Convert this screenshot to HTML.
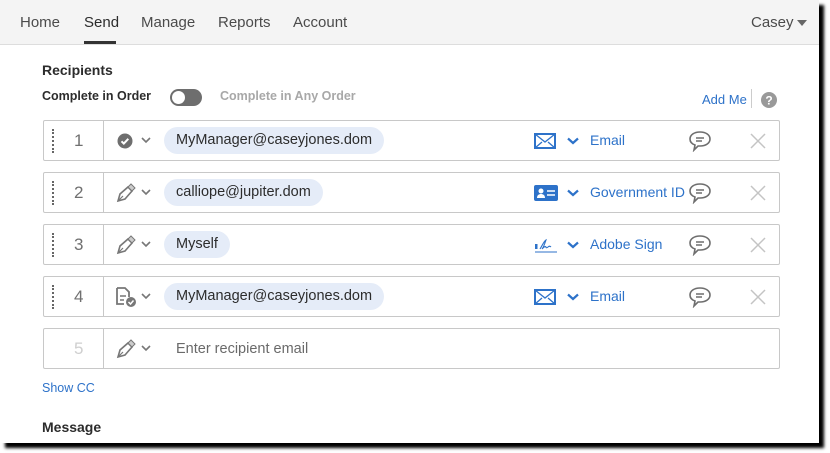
<!DOCTYPE html>
<html><head><meta charset="utf-8"><style>
body{margin:0;width:830px;height:453px;background:#fff;font-family:"Liberation Sans",sans-serif;overflow:hidden;position:relative}
.page{position:absolute;left:0;top:0;width:819px;height:443px;background:#fff;box-shadow:5px 5px 3px #000;overflow:hidden}
.nav{height:44px;background:#f4f4f4;border-bottom:1px solid #ddd;position:relative}
.nav span{position:absolute;top:14px;font-size:15px;color:#4b4b4b}
.nav .act{color:#2c2c2c}
.nav .ul{position:absolute;left:84px;top:41px;width:32px;height:3px;background:#333}
.t{position:absolute;white-space:nowrap}
.row{position:absolute;left:43px;width:735px;height:39px;border:1px solid #c8c8c8;border-radius:2px}
.num{position:absolute;left:0;top:0;width:59px;height:39px;border-right:1px solid #c8c8c8}
.dots{position:absolute;left:8px;top:8px;height:24px;border-left:2px dotted #666}
.n{position:absolute;left:30px;top:10px;font-size:17px;color:#707070}
.pill{position:absolute;left:120px;top:6px;height:27px;line-height:27px;padding:0 12px;background:#e5ecf8;border-radius:14px;font-size:14.5px;color:#2c2c2c}
.car{position:absolute;left:97px;top:16px}
.lnk{position:absolute;left:546px;top:11px;font-size:14px;color:#2d72c9}
.bc{position:absolute;left:523px;top:16px}
.ic{position:absolute;left:490px;top:12px}
.cm{position:absolute;left:644px;top:9px}
.x{position:absolute;left:706px;top:12px}
</style></head><body><div class="page">
<div class="nav">
<span style="left:20px">Home</span><span class="act" style="left:84px">Send</span><span style="left:141px">Manage</span><span style="left:218px">Reports</span><span style="left:293px">Account</span>
<div class="ul"></div>
<span style="left:751px">Casey</span>
<svg style="position:absolute;left:797px;top:20px" width="10" height="6"><path d="M0 0h10L5 6z" fill="#666"/></svg>
</div>
<div class="t" style="left:42px;top:62px;font-size:14px;font-weight:bold;color:#2c2c2c">Recipients</div>
<div class="t" style="left:42px;top:89px;font-size:12.5px;font-weight:bold;color:#2c2c2c">Complete in Order</div>
<div style="position:absolute;left:170px;top:89px;width:32px;height:17px;border-radius:9px;background:#6e6e6e"></div>
<div style="position:absolute;left:172px;top:91px;width:13px;height:13px;border-radius:7px;background:#fff"></div>
<div class="t" style="left:220px;top:89px;font-size:12.5px;font-weight:bold;color:#a8a8a8">Complete in Any Order</div>
<div class="t" style="left:702px;top:92px;font-size:13px;color:#2d72c9">Add Me</div>
<div style="position:absolute;left:751px;top:89px;height:19px;border-left:1px solid #ccc"></div>
<svg style="position:absolute;left:761px;top:92px" width="16" height="16"><circle cx="8" cy="8" r="8" fill="#999"/><text x="8" y="12.5" font-size="12" font-weight="bold" fill="#fff" text-anchor="middle" font-family="Liberation Sans">?</text></svg>

<div class="row" style="top:120px"><div class="num"><div class="dots"></div><div class="n">1</div></div>
<svg style="position:absolute;left:73px;top:12px" width="16" height="16"><circle cx="8" cy="8" r="7.5" fill="#6e6e6e"/><path d="M4.5 8.3l2.3 2.3 4.5-4.8" stroke="#fff" stroke-width="2" fill="none"/></svg>
<svg class="car" width="10" height="7"><path d="M1 1l4 4 4-4" stroke="#777" stroke-width="1.6" fill="none"/></svg>
<div class="pill">MyManager@caseyjones.dom</div>
<svg class="ic" width="22" height="16"><rect x="1" y="1" width="20" height="14" fill="none" stroke="#2d72c9" stroke-width="2"/><path d="M1 1l10 8 10-8M1 15l7-6M21 15l-7-6" stroke="#2d72c9" stroke-width="1.3" fill="none"/></svg>
<svg class="bc" width="12" height="8"><path d="M1 1.5l5 4.5 5-4.5" stroke="#2d72c9" stroke-width="2.2" fill="none"/></svg>
<div class="lnk">Email</div>
<svg class="cm" width="24" height="22"><path d="M12 2C6 2 2 5 2 9c0 3 2 5 5 6l-1 5 4-4h2c6 0 10-3 10-7s-4-7-10-7z" fill="none" stroke="#6e6e6e" stroke-width="1.6"/><path d="M8 8h8M8 11h6" stroke="#6e6e6e" stroke-width="1.4"/></svg>
<svg class="x" width="16" height="16"><path d="M1 1l14 14M15 1L1 15" stroke="#c4c4c4" stroke-width="1.5"/></svg></div>

<div class="row" style="top:172px"><div class="num"><div class="dots"></div><div class="n">2</div></div>
<svg style="position:absolute;left:71px;top:10px" width="22" height="20"><path d="M3 18l2-7 8-7 4 4-7 8z" fill="none" stroke="#777" stroke-width="1.6"/><path d="M13 4l3-3 4 4-3 3z" fill="#ccc" stroke="#777" stroke-width="1"/><path d="M3 18l5-5" stroke="#777" stroke-width="1.2"/></svg>
<svg class="car" width="10" height="7"><path d="M1 1l4 4 4-4" stroke="#777" stroke-width="1.6" fill="none"/></svg>
<div class="pill">calliope@jupiter.dom</div>
<svg class="ic" width="24" height="16"><rect x="0" y="0" width="24" height="16" rx="2" fill="#2d72c9"/><circle cx="7" cy="6" r="2.5" fill="#fff"/><path d="M3 13c0-3 2-4 4-4s4 1 4 4z" fill="#fff"/><path d="M13 6h8M13 10h8" stroke="#fff" stroke-width="1.6"/></svg>
<svg class="bc" width="12" height="8"><path d="M1 1.5l5 4.5 5-4.5" stroke="#2d72c9" stroke-width="2.2" fill="none"/></svg>
<div class="lnk">Government ID</div>
<svg class="cm" width="24" height="22"><path d="M12 2C6 2 2 5 2 9c0 3 2 5 5 6l-1 5 4-4h2c6 0 10-3 10-7s-4-7-10-7z" fill="none" stroke="#6e6e6e" stroke-width="1.6"/><path d="M8 8h8M8 11h6" stroke="#6e6e6e" stroke-width="1.4"/></svg>
<svg class="x" width="16" height="16"><path d="M1 1l14 14M15 1L1 15" stroke="#c4c4c4" stroke-width="1.5"/></svg></div>

<div class="row" style="top:224px"><div class="num"><div class="dots"></div><div class="n">3</div></div>
<svg style="position:absolute;left:71px;top:10px" width="22" height="20"><path d="M3 18l2-7 8-7 4 4-7 8z" fill="none" stroke="#777" stroke-width="1.6"/><path d="M13 4l3-3 4 4-3 3z" fill="#ccc" stroke="#777" stroke-width="1"/><path d="M3 18l5-5" stroke="#777" stroke-width="1.2"/></svg>
<svg class="car" width="10" height="7"><path d="M1 1l4 4 4-4" stroke="#777" stroke-width="1.6" fill="none"/></svg>
<div class="pill">Myself</div>
<svg class="ic" width="24" height="16"><rect x="1" y="7" width="2.5" height="5" fill="#2d72c9"/><path d="M6 12c2-3 4-8 6-9-1 3-3 8-4 9 2-2 3-3 4-2 0 1 1 1 2 0 1-1 2-1 3 0" fill="none" stroke="#2d72c9" stroke-width="1.1"/><path d="M1 15h22" stroke="#2d72c9" stroke-width="1"/></svg>
<svg class="bc" width="12" height="8"><path d="M1 1.5l5 4.5 5-4.5" stroke="#2d72c9" stroke-width="2.2" fill="none"/></svg>
<div class="lnk">Adobe Sign</div>
<svg class="cm" width="24" height="22"><path d="M12 2C6 2 2 5 2 9c0 3 2 5 5 6l-1 5 4-4h2c6 0 10-3 10-7s-4-7-10-7z" fill="none" stroke="#6e6e6e" stroke-width="1.6"/><path d="M8 8h8M8 11h6" stroke="#6e6e6e" stroke-width="1.4"/></svg>
<svg class="x" width="16" height="16"><path d="M1 1l14 14M15 1L1 15" stroke="#c4c4c4" stroke-width="1.5"/></svg></div>

<div class="row" style="top:276px"><div class="num"><div class="dots"></div><div class="n">4</div></div>
<svg style="position:absolute;left:71px;top:9px" width="24" height="22"><path d="M2 2h8l4 4v5M2 2v16h7" fill="none" stroke="#777" stroke-width="1.8"/><path d="M5 10h6M5 14h4" stroke="#777" stroke-width="1.6"/><circle cx="16" cy="16" r="5" fill="#777"/><path d="M13.5 16l2 2 3-3.5" stroke="#fff" stroke-width="1.5" fill="none"/></svg>
<svg class="car" width="10" height="7"><path d="M1 1l4 4 4-4" stroke="#777" stroke-width="1.6" fill="none"/></svg>
<div class="pill">MyManager@caseyjones.dom</div>
<svg class="ic" width="22" height="16"><rect x="1" y="1" width="20" height="14" fill="none" stroke="#2d72c9" stroke-width="2"/><path d="M1 1l10 8 10-8M1 15l7-6M21 15l-7-6" stroke="#2d72c9" stroke-width="1.3" fill="none"/></svg>
<svg class="bc" width="12" height="8"><path d="M1 1.5l5 4.5 5-4.5" stroke="#2d72c9" stroke-width="2.2" fill="none"/></svg>
<div class="lnk">Email</div>
<svg class="cm" width="24" height="22"><path d="M12 2C6 2 2 5 2 9c0 3 2 5 5 6l-1 5 4-4h2c6 0 10-3 10-7s-4-7-10-7z" fill="none" stroke="#6e6e6e" stroke-width="1.6"/><path d="M8 8h8M8 11h6" stroke="#6e6e6e" stroke-width="1.4"/></svg>
<svg class="x" width="16" height="16"><path d="M1 1l14 14M15 1L1 15" stroke="#c4c4c4" stroke-width="1.5"/></svg></div>

<div class="row" style="top:328px"><div class="num"><div class="n" style="color:#cfcfcf">5</div></div>
<svg style="position:absolute;left:71px;top:10px" width="22" height="20"><path d="M3 18l2-7 8-7 4 4-7 8z" fill="none" stroke="#777" stroke-width="1.6"/><path d="M13 4l3-3 4 4-3 3z" fill="#ccc" stroke="#777" stroke-width="1"/><path d="M3 18l5-5" stroke="#777" stroke-width="1.2"/></svg>
<svg class="car" width="10" height="7"><path d="M1 1l4 4 4-4" stroke="#777" stroke-width="1.6" fill="none"/></svg>
<div class="t" style="left:132px;top:12px;font-size:14.5px;color:#6a6a6a">Enter recipient email</div></div>

<div class="t" style="left:42px;top:381px;font-size:12.5px;color:#2d72c9">Show CC</div>
<div class="t" style="left:42px;top:419px;font-size:14px;font-weight:bold;color:#2c2c2c">Message</div>
</div></body></html>
